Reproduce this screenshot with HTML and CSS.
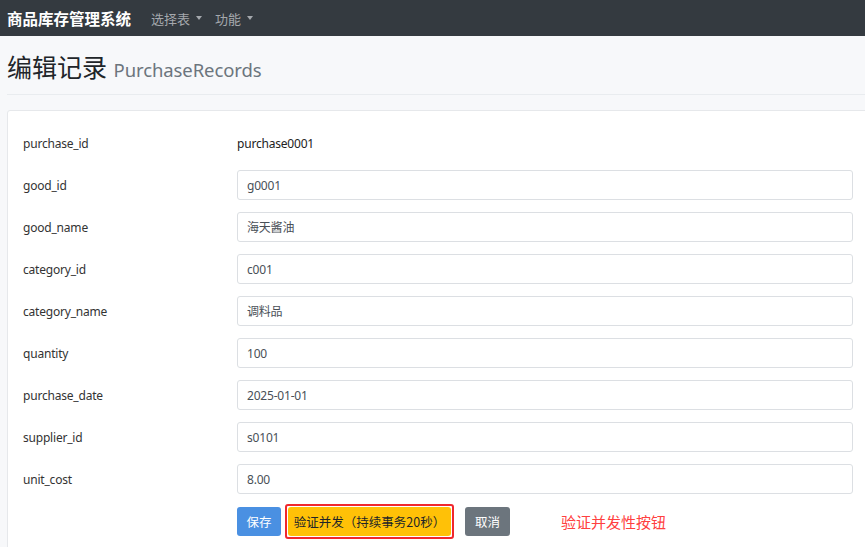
FILE: index.html
```html
<!DOCTYPE html>
<html lang="zh">
<head>
<meta charset="utf-8">
<title>编辑记录</title>
<link rel="stylesheet" href="styles.css">
</head>
<body>
<nav class="navbar">
  <span class="brand">商品库存管理系统</span>
  <span class="nav-item">选择表<span class="caret"></span></span>
  <span class="nav-item">功能<span class="caret"></span></span>
</nav>
<main class="container">
  <h1 class="title">编辑记录 <small>PurchaseRecords</small></h1>
  <hr class="divider">
  <div class="card">
    <div class="row"><label>purchase_id</label><span class="static">purchase0001</span></div>
    <div class="row"><label>good_id</label><input class="field" value="g0001"></div>
    <div class="row"><label>good_name</label><input class="field" value="海天酱油"></div>
    <div class="row"><label>category_id</label><input class="field" value="c001"></div>
    <div class="row"><label>category_name</label><input class="field" value="调料品"></div>
    <div class="row"><label>quantity</label><input class="field" value="100"></div>
    <div class="row"><label>purchase_date</label><input class="field" value="2025-01-01"></div>
    <div class="row"><label>supplier_id</label><input class="field" value="s0101"></div>
    <div class="row"><label>unit_cost</label><input class="field" value="8.00"></div>
    <div class="row actions">
      <span class="spacer"></span>
      <button class="btn btn-save">保存</button>
      <span class="highlight"><button class="btn btn-warn">验证并发（持续事务20秒）</button></span>
      <button class="btn btn-cancel">取消</button>
      <span class="note">验证并发性按钮</span>
    </div>
  </div>
</main>
</body>
</html>
```

FILE: styles.css
```css
html, body {
  margin: 0;
  padding: 0;
  overflow: hidden;
}
body {
  background: #f7f8fa;
  font-family: "Noto Sans", "Noto Sans CJK SC", sans-serif;
  color: #212529;
  width: 865px;
  height: 547px;
}
.navbar {
  height: 36px;
  background: #343a40;
  display: flex;
  align-items: center;
  padding-left: 7px;
  box-sizing: border-box;
}
.brand {
  color: #fff;
  font-family: "Noto Sans CJK SC", sans-serif;
  font-weight: 700;
  font-size: 15.5px;
  margin-right: 20px;
}
.nav-item {
  color: #a4a8ad;
  font-family: "Noto Sans CJK SC", sans-serif;
  font-size: 13px;
  margin-right: 13px;
  display: inline-flex;
  align-items: center;
}
.caret {
  display: inline-block;
  width: 0;
  height: 0;
  border-left: 3.5px solid transparent;
  border-right: 3.5px solid transparent;
  border-top: 4px solid #a4a8ad;
  margin-left: 6px;
}
.container {
  padding-left: 7px;
}
.title {
  margin: 0;
  padding-top: 11px;
  height: 44px;
  font-family: "Noto Sans CJK SC", sans-serif;
  font-weight: 400;
  font-size: 25px;
  line-height: 38px;
  color: #212529;
}
.title small {
  font-family: "Noto Sans", sans-serif;
  font-size: 18.5px;
  letter-spacing: -0.1px;
  color: #6c757d;
  margin-left: 1px;
}
.divider {
  margin: 3px 0 0 0;
  border: 0;
  border-top: 1px solid #e9ecef;
  width: 870px;
}
.card {
  margin-top: 15px;
  width: 880px;
  background: #fff;
  border: 1px solid #e6e8eb;
  border-radius: 3px;
  padding: 17px 15px 20px 15px;
  display: flex;
  flex-direction: column;
  gap: 12px;
}
.row {
  display: flex;
  align-items: center;
  height: 30px;
}
.row label {
  width: 214px;
  flex: none;
  font-size: 12px;
  letter-spacing: -0.2px;
  color: #333;
}
.static {
  font-size: 12px;
  letter-spacing: -0.2px;
  color: #222;
}
.field {
  width: 616px;
  height: 30px;
  box-sizing: border-box;
  border: 1px solid #dcdfe3;
  border-radius: 3px;
  padding: 0 9px;
  font-family: "Noto Sans", "Noto Sans CJK SC", sans-serif;
  font-size: 12px;
  letter-spacing: -0.2px;
  color: #495057;
  background: #fff;
  outline: none;
}
.actions {
  height: 36px;
  margin-top: -3px;
}
.spacer {
  width: 214px;
  flex: none;
}
.btn {
  border: 0;
  border-radius: 3px;
  height: 29px;
  font-family: "Noto Sans CJK SC", sans-serif;
  font-size: 12.5px;
  padding: 0;
  cursor: pointer;
}
.btn-save {
  background: #4a90e2;
  color: #fff;
  width: 44px;
}
.highlight {
  margin-left: 4px;
  border: 2px solid #f0282d;
  border-radius: 3px;
  padding: 1px;
  display: inline-flex;
  height: 35px;
  box-sizing: border-box;
}
.btn-warn {
  background: #ffc107;
  color: #212529;
  width: 163px;
}
.btn-cancel {
  margin-left: 11px;
  background: #6c757d;
  color: #fff;
  width: 45px;
}
.note {
  margin-left: 51px;
  font-family: "Noto Sans CJK SC", sans-serif;
  font-size: 15px;
  color: #ff4040;
}
```
